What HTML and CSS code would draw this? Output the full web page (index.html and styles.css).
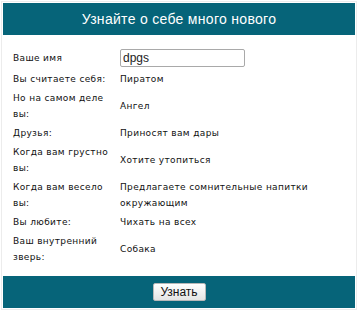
FILE: index.html
```html
<!DOCTYPE html>
<html lang="ru">
<head>
    <meta charset="UTF-8">
    <meta name="viewport" content="width=device-width, initial-scale=1.0">
    <title>Узнайте о себе</title>
    <link rel="stylesheet" href="styles.css">
</head>
<body>
    <div class="panel">
        <div class="panel-head">Узнайте о себе много нового</div>
        <div class="panel-body">
            <table class="quiz">
                <tr class="first">
                    <td class="q"><label for="name">Ваше имя</label></td>
                    <td class="a"><input type="text" id="name" value="dpgs"></td>
                </tr>
                <tr>
                    <td class="q">Вы считаете себя:</td>
                    <td class="a">Пиратом</td>
                </tr>
                <tr>
                    <td class="q">Но на самом деле вы:</td>
                    <td class="a">Ангел</td>
                </tr>
                <tr>
                    <td class="q">Друзья:</td>
                    <td class="a">Приносят вам дары</td>
                </tr>
                <tr>
                    <td class="q">Когда вам грустно вы:</td>
                    <td class="a">Хотите утопиться</td>
                </tr>
                <tr>
                    <td class="q">Когда вам весело вы:</td>
                    <td class="a">Предлагаете сомнительные напитки окружающим</td>
                </tr>
                <tr>
                    <td class="q">Вы любите:</td>
                    <td class="a">Чихать на всех</td>
                </tr>
                <tr>
                    <td class="q">Ваш внутренний зверь:</td>
                    <td class="a">Собака</td>
                </tr>
            </table>
        </div>
        <div class="panel-foot">
            <button>Узнать</button>
        </div>
    </div>
</body>
</html>
```

FILE: styles.css
```css
body {
    margin: 0;
    padding: 0;
    background-color: #ffffff;
}

.panel {
    margin: 1px;
    padding: 1px;
    border: 1px solid #ececec;
}

.panel-head {
    height: 32px;
    line-height: 32px;
    background-color: #066479;
    color: #ffffff;
    text-align: center;
    font-family: "Liberation Sans", Arial, sans-serif;
    font-size: 14px;
    letter-spacing: 0.3px;
}

.panel-body {
    padding: 12px 10px 10px 10px;
}

.quiz {
    border-collapse: collapse;
    font-family: "DejaVu Sans", Verdana, sans-serif;
    font-size: 9px;
    letter-spacing: 0.35px;
    color: #111111;
}

.quiz td {
    padding: 1.5px 0;
    line-height: 16px;
    vertical-align: middle;
}

.quiz tr.first td {
    padding: 2px 0;
}

.quiz td.q {
    width: 107px;
}

.quiz td.a {
    width: 196px;
}

input {
    width: 119px;
    height: 14px;
    margin: 0;
    padding: 1px 2px;
    border: 1px solid #a9a9a9;
    border-radius: 2px;
    font-family: "Liberation Sans", Arial, sans-serif;
    font-size: 12px;
    letter-spacing: 0;
    color: #222222;
}

.panel-foot {
    height: 32px;
    background-color: #066479;
    display: flex;
    align-items: center;
    justify-content: center;
}

button {
    width: 53px;
    height: 18px;
    padding: 0;
    border: 1px solid #b8b8b8;
    border-radius: 2px;
    background: linear-gradient(#ffffff, #e4e4e4);
    font-family: "Liberation Sans", Arial, sans-serif;
    font-size: 12px;
    color: #111111;
    cursor: pointer;
}
```
